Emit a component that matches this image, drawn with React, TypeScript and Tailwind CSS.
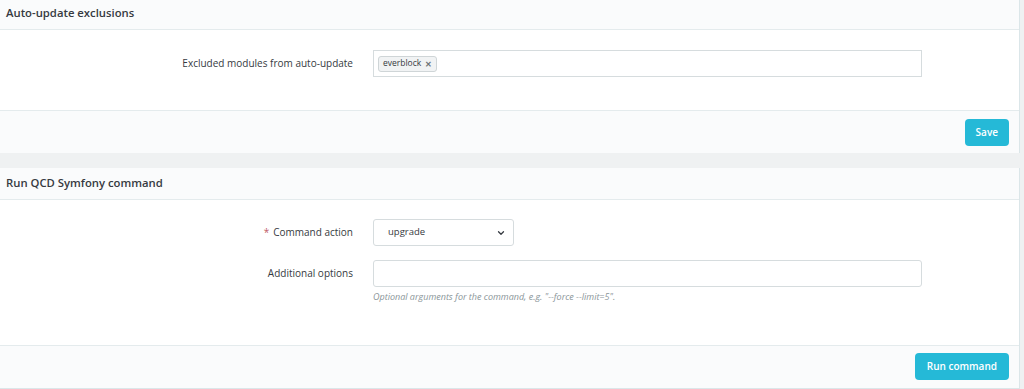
import { ChevronDown } from "lucide-react";

const font = { fontFamily: '"Open Sans", "Noto Sans", sans-serif' };

const App = () => {
  return (
    <div className="min-h-[389px] bg-[#eff1f2] pr-[4px] text-[#363a41]" style={font}>
      {/* panel 1 */}
      <section className="bg-white border-r border-[#dbe6e9]">
        <div className="h-[30px] flex items-center px-[6px] bg-[#fafbfc] border-b border-[#e4ebed]">
          <h3 className="text-[11.3px] font-semibold -mt-[3px]">Auto-update exclusions</h3>
        </div>
        <div className="pt-[20px] pb-[33px]">
          <div className="flex items-center gap-[20px]">
            <label className="w-[353px] text-right text-[10px]">Excluded modules from auto-update</label>
            <div className="w-[549px] h-[27px] border border-[#d6dcde] flex items-center px-[4px]">
              <span className="flex items-center gap-[4px] h-[16px] px-[4px] rounded-[3px] border border-[#cfd5d7] bg-[#f1f3f4] text-[8.5px] leading-none">
                everblock
                <span className="text-[8px] font-bold text-[#6c7477]">✕</span>
              </span>
            </div>
          </div>
        </div>
        <div className="h-[43px] flex items-center justify-end pr-[10px] bg-[#fafbfc] border-t border-[#e4ebed]">
          <button className="h-[27px] px-[11px] rounded-[4px] bg-[#25b9d7] text-white text-[10px] font-semibold">
            Save
          </button>
        </div>
      </section>

      <div className="h-[15px]" />

      {/* panel 2 */}
      <section className="bg-white border-r border-b border-[#dbe6e9]">
        <div className="h-[32px] flex items-center px-[6px] bg-[#fafbfc] border-b border-[#e4ebed]">
          <h3 className="text-[11.3px] font-semibold">Run QCD Symfony command</h3>
        </div>
        <div className="pt-[19px] pb-[41px] flex flex-col gap-[14px]">
          <div className="flex items-center gap-[20px]">
            <label className="w-[353px] text-right text-[10px]">
              <span className="text-[#c05c67] mr-[4px]">*</span>Command action
            </label>
            <div className="w-[141px] h-[27px] border border-[#d6dcde] rounded-[3px] flex items-center justify-between pl-[14px] pr-[7px] text-[9.5px]">
              upgrade
              <ChevronDown className="w-[10px] h-[10px]" strokeWidth={3} />
            </div>
          </div>
          <div className="flex gap-[20px]">
            <label className="w-[353px] text-right text-[10px] pt-[6px]">Additional options</label>
            <div className="flex flex-col">
              <div className="w-[549px] h-[27px] border border-[#d6dcde] rounded-[3px]" />
              <p className="mt-[3px] text-[9px] italic text-[#8a9599]">
                Optional arguments for the command, e.g. "--force --limit=5".
              </p>
            </div>
          </div>
        </div>
        <div className="h-[43px] flex items-center justify-end pr-[10px] bg-[#fafbfc] border-t border-[#e4ebed]">
          <button className="h-[27px] px-[12px] rounded-[4px] bg-[#25b9d7] text-white text-[10px] font-semibold">
            Run command
          </button>
        </div>
      </section>
    </div>
  );
};

export default App;
